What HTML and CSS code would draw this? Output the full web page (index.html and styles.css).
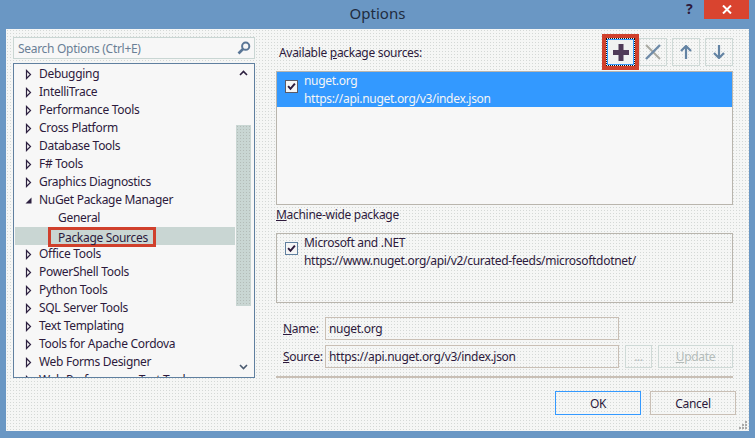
FILE: index.html
```html
<!DOCTYPE html>
<html lang="en">
<head>
    <meta charset="UTF-8">
    <meta name="viewport" content="width=device-width, initial-scale=1.0">
    <title>Options</title>
    <link rel="stylesheet" href="styles.css">
</head>
<body>
    <svg class="defs" width="0" height="0">
        <symbol id="closed" viewBox="0 0 7 11"><path d="M1.5 1.5 L5.5 5.5 L1.5 9.5 Z" fill="#f5f5f5" stroke="#2d2040" stroke-width="1.2"/></symbol>
        <symbol id="open" viewBox="0 0 7 11"><path d="M0.5 8.5 L6.5 8.5 L6.5 2.5 Z" fill="#2d2040"/></symbol>
        <symbol id="check" viewBox="0 0 13 13"><path d="M2.5 6 L5.3 9.2 L10.5 3" fill="none" stroke="#2d1a3c" stroke-width="2.3"/></symbol>
    </svg>

    <div class="titlebar">
        <span class="title">Options</span>
        <span class="help">?</span>
        <span class="close">
            <svg width="10" height="9" viewBox="0 0 10 9"><path d="M1 .5 L9 8.5 M9 .5 L1 8.5" stroke="#fff" stroke-width="2"/></svg>
        </span>
    </div>

    <div class="dialog">
        <div class="columns">
            <!-- Left: search and tree -->
            <div class="sidebar">
                <div class="search">
                    <span>Search Options (Ctrl+E)</span>
                    <svg width="14" height="14" viewBox="0 0 14 14"><circle cx="8.7" cy="5.2" r="3.6" fill="none" stroke="#5a7696" stroke-width="2"/><path d="M6 8 L1.5 12.5" stroke="#5a7696" stroke-width="2.6"/></svg>
                </div>
                <div class="tree">
                    <div class="tree-rows">
                        <div class="row"><svg class="arrow"><use href="#closed"/></svg>Debugging</div>
                        <div class="row"><svg class="arrow"><use href="#closed"/></svg>IntelliTrace</div>
                        <div class="row"><svg class="arrow"><use href="#closed"/></svg>Performance Tools</div>
                        <div class="row"><svg class="arrow"><use href="#closed"/></svg>Cross Platform</div>
                        <div class="row"><svg class="arrow"><use href="#closed"/></svg>Database Tools</div>
                        <div class="row"><svg class="arrow"><use href="#closed"/></svg>F# Tools</div>
                        <div class="row"><svg class="arrow"><use href="#closed"/></svg>Graphics Diagnostics</div>
                        <div class="row"><svg class="arrow"><use href="#open"/></svg>NuGet Package Manager</div>
                        <div class="row child">General</div>
                        <div class="row child selected"><span class="marked">Package Sources</span></div>
                        <div class="row"><svg class="arrow"><use href="#closed"/></svg>Office Tools</div>
                        <div class="row"><svg class="arrow"><use href="#closed"/></svg>PowerShell Tools</div>
                        <div class="row"><svg class="arrow"><use href="#closed"/></svg>Python Tools</div>
                        <div class="row"><svg class="arrow"><use href="#closed"/></svg>SQL Server Tools</div>
                        <div class="row"><svg class="arrow"><use href="#closed"/></svg>Text Templating</div>
                        <div class="row"><svg class="arrow"><use href="#closed"/></svg>Tools for Apache Cordova</div>
                        <div class="row"><svg class="arrow"><use href="#closed"/></svg>Web Forms Designer</div>
                        <div class="row"><svg class="arrow"><use href="#closed"/></svg>Web Performance Test Tools</div>
                    </div>
                    <div class="scrollbar">
                        <svg class="scroll-arrow" width="9" height="6" viewBox="0 0 9 6"><path d="M1 5 L4.5 1.5 L8 5" fill="none" stroke="#2d2040" stroke-width="1.6"/></svg>
                        <div class="thumb"></div>
                        <svg class="scroll-arrow down" width="9" height="6" viewBox="0 0 9 6"><path d="M1 1 L4.5 4.5 L8 1" fill="none" stroke="#4a5a70" stroke-width="1.6"/></svg>
                    </div>
                </div>
            </div>

            <!-- Right: package sources -->
            <div class="content">
                <div class="sources-head">
                    <span class="head-label">Available <u>p</u>ackage sources:</span>
                    <div class="toolbar">
                        <span class="marked-btn">
                            <span class="tool focused">
                                <svg width="16" height="17" viewBox="0 0 16 17"><path d="M8 0 V17 M0 8.5 H16" stroke="#4f3b58" stroke-width="5"/></svg>
                            </span>
                        </span>
                        <span class="tool">
                            <svg width="16" height="16" viewBox="0 0 16 16"><path d="M1 1 L15 15" stroke="#a8a8a0" stroke-width="2"/><path d="M15 1 L1 15" stroke="#6f8ba8" stroke-width="2.4"/></svg>
                        </span>
                        <span class="tool">
                            <svg width="12" height="14" viewBox="0 0 12 14"><path d="M6 1 V14 M1 6 L6 1 L11 6" fill="none" stroke="#6383a3" stroke-width="2.2"/></svg>
                        </span>
                        <span class="tool">
                            <svg width="12" height="14" viewBox="0 0 12 14"><path d="M6 0 V13 M1 8 L6 13 L11 8" fill="none" stroke="#6383a3" stroke-width="2.2"/></svg>
                        </span>
                    </div>
                </div>

                <div class="listbox">
                    <div class="source active">
                        <svg class="checkbox"><use href="#check"/></svg>
                        <div>nuget.org<br>https://api.nuget.org/v3/index.json</div>
                    </div>
                </div>

                <div class="machine-label"><u>M</u>achine-wide package</div>
                <div class="machine-box">
                    <div class="source">
                        <svg class="checkbox blue"><use href="#check"/></svg>
                        <div>Microsoft and .NET<br>https://www.nuget.org/api/v2/curated-feeds/microsoftdotnet/</div>
                    </div>
                </div>

                <div class="fields">
                    <div class="field">
                        <label class="field-label"><u>N</u>ame:</label>
                        <span class="input">nuget.org</span>
                    </div>
                    <div class="field">
                        <label class="field-label"><u>S</u>ource:</label>
                        <span class="input">https://api.nuget.org/v3/index.json</span>
                        <span class="btn-disabled dots">...</span>
                        <span class="btn-disabled update"><u>U</u>pdate</span>
                    </div>
                </div>
            </div>
        </div>

        <div class="footer">
            <span class="btn ok">OK</span>
            <span class="btn">Cancel</span>
        </div>
        <svg class="grip" width="9" height="9" viewBox="0 0 9 9"><path d="M7 1h2v2h-2z M4 4h2v2h-2z M7 4h2v2h-2z M1 7h2v2h-2z M4 7h2v2h-2z M7 7h2v2h-2z" fill="#a9a9a9"/></svg>
    </div>
</body>
</html>
```

FILE: styles.css
```css
/* Page */
body {
    margin: 0;
    height: 438px;
    overflow: hidden;
    background-color: #6a97c4;
    font-family: "Noto Sans", "Open Sans", sans-serif;
    font-size: 12px;
    letter-spacing: -0.3px;
    color: #2d1a3c;
    display: flex;
    flex-direction: column;
}

u {
    text-underline-offset: 1px;
}

.defs {
    position: absolute;
}

/* Title bar */
.titlebar {
    height: 29px;
    flex: none;
    display: flex;
    align-items: flex-start;
    position: relative;
}

.title {
    flex: 1;
    text-align: center;
    font-size: 15px;
    line-height: 27px;
    letter-spacing: 0;
    color: #1f2c40;
}

.help {
    position: absolute;
    left: 686px;
    top: 1px;
    font-size: 14px;
    line-height: 16px;
    font-weight: bold;
}

.close {
    position: absolute;
    left: 704px;
    top: 0;
    width: 45px;
    height: 19px;
    background: #d9442f;
    display: flex;
    align-items: center;
    justify-content: center;
}

/* Dialog body */
.dialog {
    margin: 0 6px;
    height: 402px;
    box-sizing: border-box;
    background-color: #f5f6f5;
    background-image: radial-gradient(#d4d8d6 0.7px, transparent 0.8px);
    background-size: 3px 3px;
    padding: 8px 13px 0 7px;
    position: relative;
}

.columns {
    display: flex;
    gap: 21px;
    padding-right: 3px;
}

/* Sidebar */
.sidebar {
    width: 242px;
    flex: none;
}

.search {
    height: 22px;
    box-sizing: border-box;
    border: 1px solid #c9d6d3;
    background: #f7f7f7;
    color: #6a7f96;
    display: flex;
    align-items: center;
    justify-content: space-between;
    padding: 0 3px 0 4px;
}

.tree {
    margin-top: 4px;
    height: 315px;
    box-sizing: border-box;
    border: 1px solid #5f7f9f;
    background: #f7f7f7;
    display: flex;
    overflow: hidden;
}

.tree-rows {
    flex: 1;
    padding: 1px 0 0 1px;
}

.row {
    height: 18px;
    line-height: 18px;
    display: flex;
    align-items: center;
    padding-left: 10px;
    white-space: nowrap;
}

.arrow {
    width: 7px;
    height: 11px;
    margin-right: 7px;
    flex: none;
}

.row.child {
    padding-left: 43px;
}

.row.selected {
    background: #c9d6d3;
}

.marked {
    margin-left: -10px;
    padding: 0 5px 0 7px;
    height: 20px;
    line-height: 15px;
    box-sizing: border-box;
    border: 3px solid #d0402c;
    margin-top: 2px;
    flex: none;
}

.scrollbar {
    width: 17px;
    flex: none;
    display: flex;
    flex-direction: column;
    align-items: center;
    padding-right: 2px;
}

.scroll-arrow {
    margin-top: 6px;
    height: 6px;
    flex: none;
}

.thumb {
    margin-top: 49px;
    width: 15px;
    height: 181px;
    background: #c9d6d3;
    background-image: radial-gradient(#b3bcb8 0.7px, transparent 0.8px);
    background-size: 3px 3px;
}

.scroll-arrow.down {
    margin-top: 58px;
}

/* Right side */
.content {
    flex: 1;
    min-width: 0;
}

.sources-head {
    height: 37px;
    display: flex;
    justify-content: space-between;
    align-items: flex-start;
    margin-top: -3px;
}

.head-label {
    margin: 10px 0 0 3px;
    line-height: 18px;
}

.toolbar {
    display: flex;
    gap: 5px;
    margin-top: 4px;
}

.tool {
    width: 28px;
    height: 28px;
    box-sizing: border-box;
    border: 1px solid #cfdad7;
    display: flex;
    align-items: center;
    justify-content: center;
}

.tool.focused {
    width: 29px;
    border: 1px dotted #111;
    outline: 1px solid #3399ff;
    outline-offset: -2px;
}

.marked-btn {
    border: 4px solid #d0402c;
    margin: -4px -5px -4px 0;
    background: #f0f2f1;
}

.listbox {
    height: 134px;
    box-sizing: border-box;
    border: 1px solid #b9b5ad;
    background: #f7f7f7;
}

.source {
    display: flex;
    gap: 6px;
    padding: 0 8px;
    line-height: 17.5px;
    height: 35px;
    box-sizing: border-box;
}

.source.active {
    background: #3399ff;
    color: #f5f5f5;
}

.checkbox {
    width: 13px;
    height: 13px;
    margin-top: 8px;
    background: #f5f5f5;
    box-sizing: border-box;
    border: 1px solid #5a5a66;
    flex: none;
}

.checkbox.blue {
    border-color: #5f7f9f;
}

.machine-label {
    line-height: 18px;
    height: 27px;
    margin-top: 1px;
}

.machine-box {
    height: 70px;
    box-sizing: border-box;
    border: 1px solid #b9b5ad;
}

/* Name and source fields */
.fields {
    margin-top: 14px;
    padding-bottom: 8px;
    border-bottom: 2px solid #c9bfb5;
    display: flex;
    flex-direction: column;
    gap: 5px;
}

.field {
    display: flex;
    align-items: center;
    gap: 6px;
}

.field-label {
    width: 43px;
    box-sizing: border-box;
    padding-left: 7px;
    flex: none;
}

.input {
    width: 294px;
    height: 23px;
    box-sizing: border-box;
    border: 1px solid #c9bfb5;
    padding-left: 3px;
    line-height: 21px;
    flex: none;
}

.btn-disabled {
    height: 23px;
    box-sizing: border-box;
    border: 1px solid #cfdad7;
    color: #b4bcba;
    display: flex;
    align-items: center;
    justify-content: center;
}

.dots {
    width: 27px;
}

.update {
    width: 75px;
}

/* Footer buttons */
.footer {
    display: flex;
    justify-content: flex-end;
    gap: 9px;
    margin-top: 13px;
}

.btn {
    width: 86px;
    height: 24px;
    box-sizing: border-box;
    border: 1px solid #c9bfb5;
    display: flex;
    align-items: center;
    justify-content: center;
}

.btn.ok {
    border-color: #3399ff;
}

.grip {
    position: absolute;
    right: 2px;
    bottom: 2px;
}
```
